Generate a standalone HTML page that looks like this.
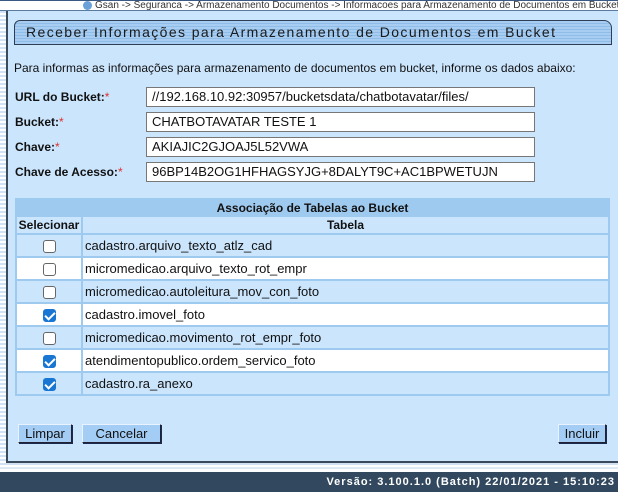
<!DOCTYPE html>
<html><head><meta charset="utf-8"><style>
*{margin:0;padding:0;box-sizing:border-box}
body{width:618px;height:492px;overflow:hidden;background:#fff;font-family:"Liberation Sans",Arial,sans-serif;position:relative}
.topline{position:absolute;left:0;top:0;width:618px;height:2px;background:#3a5a85}
.crumb{position:absolute;left:0;top:1px;width:618px;height:10px;background:#fff;border-bottom:1px solid #5a7aa0;font-size:10px;line-height:10px;color:#333;text-align:left;padding-left:83px;white-space:nowrap;overflow:hidden}
.crumb i{display:inline-block;width:9px;height:9px;border-radius:50%;background:#6aa0d8;vertical-align:top;margin-right:3px}
.stripe{position:absolute;left:0;top:11px;width:6px;height:452px;background:repeating-linear-gradient(#cfe2f6 0 2px,#fff 2px 4px)}
.panel{position:absolute;left:6px;top:11px;width:620px;height:452px;background:#cbe5fd;border-left:2px solid #3b4a5a;border-bottom:2px solid #3b4a5a}
.title{position:absolute;left:14px;top:20px;width:598px;height:25px;border:1px solid #2d3e55;border-radius:6px 8px 0 0;background:repeating-linear-gradient(#a7cdf2 0 2px,#8fbde8 2px 3px);font-size:14px;letter-spacing:1.4px;color:#1a1a1a;padding:3px 0 0 11px}
.intro{position:absolute;left:14px;top:61px;font-size:12px;color:#111}
.lbl{position:absolute;left:15px;font-size:12px;font-weight:bold;color:#111}
.lbl span{color:#e03030;font-weight:normal}
.inp{position:absolute;left:146px;width:389px;height:20px;background:#fff;border:1px solid #777;font-size:13px;padding:1px 0 0 5px;color:#111}
.tbl{position:absolute;left:15px;top:198px;width:595px;border-collapse:collapse;font-size:13px;color:#111}
.tbl td,.tbl th{border:2px solid #9fcaf0}
.tbl .h1 th{background:#9fcaf0;height:17px;font-weight:bold;font-size:12px;text-align:center}
.tbl .h2 th{background:#cbe5fd;height:18px;font-weight:bold;font-size:12px}
.tbl td{height:23px;padding-left:2px;padding-top:0;padding-bottom:0;line-height:19px}
.tbl td.c{width:66px;text-align:center;padding:0}
.a td{background:#cbe5fd}.b td{background:#fff}
.cb{display:inline-block;width:13px;height:13px;border:1px solid #666;border-radius:3px;background:#fff;vertical-align:middle;position:relative}
.cb.on{background:#1976d2;border-color:#1976d2}
.cb.on:after{content:"";position:absolute;left:3px;top:0px;width:4px;height:8px;border:solid #fff;border-width:0 2px 2px 0;transform:rotate(45deg)}
.btn{position:absolute;top:424px;height:19px;background:#a3cdf5;border:1px solid #223;border-top-color:#e8f3ff;border-left-color:#e8f3ff;box-shadow:1px 1px 0 #1a2a50;font-size:13px;text-align:center;line-height:17px;color:#111}
.gap{position:absolute;left:0;top:463px;width:618px;height:9px;background:linear-gradient(#cfe1f2 0 2px,#fff 2px 4px,#dde9f5 4px 6px,#fff 6px)}
.foot{position:absolute;left:0;top:472px;width:618px;height:20px;background:#32485f;color:#fff;font-size:11px;font-weight:bold;letter-spacing:1px;text-align:right;padding:4px 3px 0 0}
</style></head><body>
<div class="topline"></div>
<div class="crumb"><i></i>Gsan -&gt; Seguranca -&gt; Armazenamento Documentos -&gt; Informacoes para Armazenamento de Documentos em Bucket</div>
<div class="stripe"></div>
<div class="panel"></div>
<div class="title">Receber Informações para Armazenamento de Documentos em Bucket</div>
<div class="intro">Para informas as informações para armazenamento de documentos em bucket, informe os dados abaixo:</div>
<div class="lbl" style="top:90px">URL do Bucket:<span>*</span></div>
<div class="inp" style="top:87px">//192.168.10.92:30957/bucketsdata/chatbotavatar/files/</div>
<div class="lbl" style="top:115px">Bucket:<span>*</span></div>
<div class="inp" style="top:112px">CHATBOTAVATAR TESTE 1</div>
<div class="lbl" style="top:140px">Chave:<span>*</span></div>
<div class="inp" style="top:137px">AKIAJIC2GJOAJ5L52VWA</div>
<div class="lbl" style="top:165px">Chave de Acesso:<span>*</span></div>
<div class="inp" style="top:162px">96BP14B2OG1HFHAGSYJG+8DALYT9C+AC1BPWETUJN</div>
<table class="tbl">
<tr class="h1"><th colspan="2">Associação de Tabelas ao Bucket</th></tr>
<tr class="h2"><th>Selecionar</th><th>Tabela</th></tr>
<tr class="a"><td class="c"><span class="cb"></span></td><td>cadastro.arquivo_texto_atlz_cad</td></tr>
<tr class="b"><td class="c"><span class="cb"></span></td><td>micromedicao.arquivo_texto_rot_empr</td></tr>
<tr class="a"><td class="c"><span class="cb"></span></td><td>micromedicao.autoleitura_mov_con_foto</td></tr>
<tr class="b"><td class="c"><span class="cb on"></span></td><td>cadastro.imovel_foto</td></tr>
<tr class="a"><td class="c"><span class="cb"></span></td><td>micromedicao.movimento_rot_empr_foto</td></tr>
<tr class="b"><td class="c"><span class="cb on"></span></td><td>atendimentopublico.ordem_servico_foto</td></tr>
<tr class="a"><td class="c"><span class="cb on"></span></td><td>cadastro.ra_anexo</td></tr>
</table>
<div class="btn" style="left:18px;width:54px">Limpar</div>
<div class="btn" style="left:82px;width:79px">Cancelar</div>
<div class="btn" style="left:558px;width:48px">Incluir</div>
<div class="gap"></div>
<div class="foot">Versão: 3.100.1.0 (Batch) 22/01/2021 - 15:10:23</div>
</body></html>
